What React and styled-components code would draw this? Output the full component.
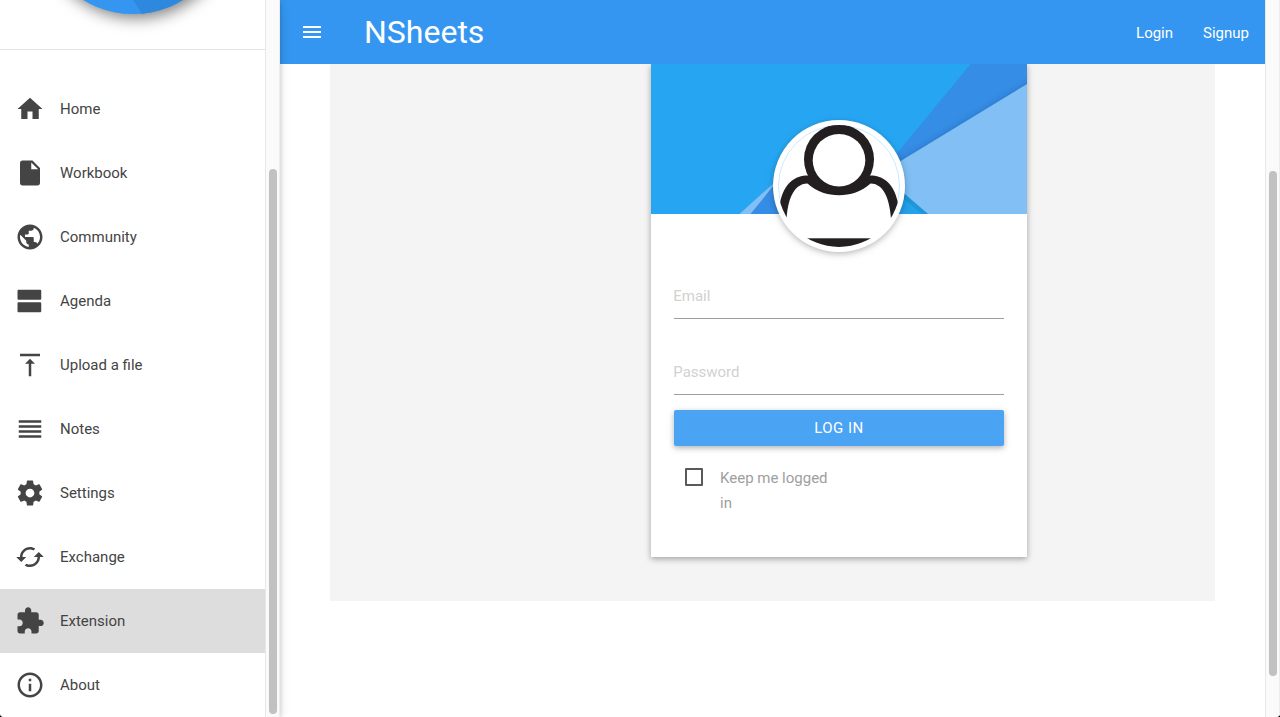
import React from "react";
import styled, { createGlobalStyle } from "styled-components";

const GlobalStyle = createGlobalStyle`
  * { box-sizing: border-box; }
  body {
    margin: 0;
    background: #000;
    color: #444;
    font: 15px/22px Roboto, "Liberation Sans", sans-serif;
  }
`;

const Shell = styled.div`
  display: flex;
  width: 1280px;
  height: 717px;
  overflow: hidden;
  border-radius: 0 0 4px 4px;
  background: #fff;
`;

const Sidebar = styled.aside`
  display: flex;
  flex: none;
  width: 280px;
  height: 100%;
  background: #fff;
  position: relative;
  z-index: 2;
  box-shadow: 0 2px 5px 0 rgba(0, 0, 0, 0.16), 0 2px 10px 0 rgba(0, 0, 0, 0.12);
`;

const SidebarContent = styled.div`
  width: 265px;
  flex: none;
`;

const Brand = styled.div`
  display: flex;
  justify-content: center;
  align-items: flex-end;
  height: 50px;
  padding-bottom: 35px;
  overflow: hidden;
  border-bottom: 1px solid #e4e4e4;
`;

const Logo = styled.div`
  flex: none;
  width: 192px;
  height: 192px;
  border-radius: 50%;
  overflow: hidden;
  background: #3496f0;
  box-shadow: 3px 4px 15px rgba(0, 0, 0, 0.5);

  svg { display: block; }
`;

const Menu = styled.nav`
  display: flex;
  flex-direction: column;
  padding-top: 27px;
`;

const MenuItem = styled.a`
  display: flex;
  align-items: center;
  gap: 15px;
  height: 64px;
  padding: 0 15px;
  color: #444;
  background: ${(p) => (p.$active ? "#ddd" : "transparent")};
`;

const Glyph = styled.svg`
  flex: none;
  display: block;
  width: ${(p) => p.$size}px;
  height: ${(p) => p.$size}px;
  fill: currentColor;
`;

const ScrollTrack = styled.div`
  flex: none;
  width: 15px;
  height: 100%;
  padding: ${(p) => p.$top}px 2px 0 3px;
  background: #fafafa;
  border-left: 1px solid #e8e8e8;
  border-right: 1px solid #ededed;
`;

const ScrollThumb = styled.div`
  width: 8px;
  height: ${(p) => p.$length}px;
  border-radius: 4px;
  background: #c1c1c1;
`;

const Main = styled.main`
  flex: none;
  width: 985px;
  background: #fff;
`;

const TopBar = styled.header`
  display: flex;
  align-items: center;
  height: 64px;
  padding: 0 16px 0 20px;
  background: #3496f0;
  color: #fff;
`;

const Title = styled.h1`
  margin: 0 auto 0 40px;
  font-size: 32px;
  font-weight: 400;
  line-height: 64px;
`;

const TopLinks = styled.div`
  display: flex;
  gap: 30px;
  padding-top: 2px;
`;

const Panel = styled.section`
  display: flex;
  justify-content: flex-start;
  width: 885px;
  height: 537px;
  margin: 0 50px;
  padding-left: 321px;
  background: #f4f4f4;
  overflow: hidden;
`;

const Card = styled.div`
  width: 376px;
  height: 493px;
  background: #fff;
  box-shadow: 0 2px 5px 0 rgba(0, 0, 0, 0.2), 0 2px 8px 0 rgba(0, 0, 0, 0.16);
`;

const Cover = styled.div`
  height: 150px;
  position: relative;

  > svg { display: block; }
`;

const Avatar = styled.div`
  position: absolute;
  left: 122px;
  top: 56px;
  width: 132px;
  height: 132px;
  border-radius: 50%;
  background: #fff;
  box-shadow: 0 2px 5px 0 rgba(0, 0, 0, 0.16), 0 2px 10px 0 rgba(0, 0, 0, 0.12);

  svg { display: block; }
`;

const Form = styled.form`
  display: flex;
  flex-direction: column;
  padding: 59px 23px 0;
`;

const Field = styled.label`
  display: block;
  height: 46px;
  margin-bottom: ${(p) => p.$gap}px;
  padding-top: 12px;
  border-bottom: 1px solid #9e9e9e;
  color: #d1d1d1;
  text-indent: -0.75px;
`;

const SubmitButton = styled.button`
  height: 36px;
  padding: 0;
  border: 0;
  border-radius: 2px;
  background: #4aa3f3;
  color: #fff;
  font: inherit;
  line-height: 36px;
  letter-spacing: 0.5px;
  box-shadow: 0 2px 5px 0 rgba(0, 0, 0, 0.2), 0 2px 8px 0 rgba(0, 0, 0, 0.12);
`;

const Remember = styled.label`
  display: flex;
  align-items: flex-start;
  gap: 17px;
  width: 165px;
  margin-top: 20px;
  padding-left: 11px;
  color: #9e9e9e;
  line-height: 25px;
`;

const CheckBox = styled.span`
  flex: none;
  width: 18px;
  height: 18px;
  margin-top: 2px;
  border: 2px solid #5a5a5a;
  border-radius: 1px;
`;

const icons = {
  home: "M10 20v-6h4v6h5v-8h3L12 3 2 12h3v8z",
  file: "M6 2c-1.1 0-1.99.9-1.99 2L4 20c0 1.1.89 2 1.99 2H18c1.1 0 2-.9 2-2V8l-6-6H6zm7 7V3.5L18.5 9H13z",
  globe:
    "M12 2C6.48 2 2 6.48 2 12s4.48 10 10 10 10-4.48 10-10S17.52 2 12 2zm-1 17.93c-3.95-.49-7-3.85-7-7.93 0-.62.08-1.21.21-1.79L9 15v1c0 1.1.9 2 2 2v1.93zm6.9-2.54c-.26-.81-1-1.39-1.9-1.39h-1v-3c0-.55-.45-1-1-1H8v-2h2c.55 0 1-.45 1-1V7h2c1.1 0 2-.9 2-2v-.41c2.93 1.19 5 4.06 5 7.41 0 2.08-.8 3.97-2.1 5.39z",
  agenda:
    "M20 13H3c-.55 0-1 .45-1 1v6c0 .55.45 1 1 1h17c.55 0 1-.45 1-1v-6c0-.55-.45-1-1-1zm0-10H3c-.55 0-1 .45-1 1v6c0 .55.45 1 1 1h17c.55 0 1-.45 1-1V4c0-.55-.45-1-1-1z",
  upload: "M8 11h3v10h2V11h3l-4-4-4 4zM4 3v2h16V3H4z",
  notes: "M3 15h18v-2H3v2zm0 4h18v-2H3v2zm0-8h18V9H3v2zm0-6v2h18V5H3z",
  gear:
    "M19.43 12.98c.04-.32.07-.64.07-.98s-.03-.66-.07-.98l2.11-1.65c.19-.15.24-.42.12-.64l-2-3.46c-.12-.22-.39-.3-.61-.22l-2.49 1c-.52-.4-1.08-.73-1.69-.98l-.38-2.65C14.46 2.18 14.25 2 14 2h-4c-.25 0-.46.18-.49.42l-.38 2.65c-.61.25-1.17.59-1.69.98l-2.49-1c-.23-.09-.49 0-.61.22l-2 3.46c-.13.22-.07.49.12.64l2.11 1.65c-.04.32-.07.65-.07.98s.03.66.07.98l-2.11 1.65c-.19.15-.24.42-.12.64l2 3.46c.12.22.39.3.61.22l2.49-1c.52.4 1.08.73 1.69.98l.38 2.65c.03.24.24.42.49.42h4c.25 0 .46-.18.49-.42l.38-2.65c.61-.25 1.17-.59 1.69-.98l2.49 1c.23.09.49 0 .61-.22l2-3.46c.12-.22.07-.49-.12-.64l-2.11-1.65zM12 15.5c-1.93 0-3.5-1.57-3.5-3.5s1.57-3.5 3.5-3.5 3.5 1.57 3.5 3.5-1.57 3.5-3.5 3.5z",
  exchange:
    "M19 8l-4 4h3c0 3.31-2.69 6-6 6-1.01 0-1.97-.25-2.8-.7l-1.46 1.46C8.97 19.54 10.43 20 12 20c4.42 0 8-3.58 8-8h3l-4-4zM6 12c0-3.31 2.69-6 6-6 1.01 0 1.97.25 2.8.7l1.46-1.46C15.03 4.46 13.57 4 12 4c-4.42 0-8 3.58-8 8H1l4 4 4-4H6z",
  puzzle:
    "M20.5 11H19V7c0-1.1-.9-2-2-2h-4V3.5C13 2.12 11.88 1 10.5 1S8 2.12 8 3.5V5H4c-1.1 0-1.99.9-1.99 2v3.8H3.5c1.49 0 2.7 1.21 2.7 2.7s-1.21 2.7-2.7 2.7H2V20c0 1.1.9 2 2 2h3.8v-1.5c0-1.49 1.21-2.7 2.7-2.7 1.49 0 2.7 1.21 2.7 2.7V22H17c1.1 0 2-.9 2-2v-4h1.5c1.38 0 2.5-1.12 2.5-2.5S21.88 11 20.5 11z",
  info: "M11 17h2v-6h-2v6zm1-15C6.48 2 2 6.48 2 12s4.48 10 10 10 10-4.48 10-10S17.52 2 12 2zm0 18c-4.41 0-8-3.59-8-8s3.59-8 8-8 8 3.59 8 8-3.59 8-8 8zM11 9h2V7h-2v2z",
  menu: "M3 18h18v-2H3v2zm0-5h18v-2H3v2zm0-7v2h18V6H3z",
};

function Icon({ name, size = 30 }) {
  return (
    <Glyph viewBox="0 0 24 24" $size={size} aria-hidden="true">
      <path d={icons[name]} />
    </Glyph>
  );
}

const entries = [
  ["home", "Home"],
  ["file", "Workbook"],
  ["globe", "Community"],
  ["agenda", "Agenda"],
  ["upload", "Upload a file"],
  ["notes", "Notes"],
  ["gear", "Settings"],
  ["exchange", "Exchange"],
  ["puzzle", "Extension"],
  ["info", "About"],
];

function CoverArt() {
  return (
    <svg width="376" height="150" viewBox="0 0 376 150">
      <defs>
        <filter id="edge" x="-20%" y="-20%" width="140%" height="140%">
          <feDropShadow dx="0" dy="0" stdDeviation="3" floodColor="#003a70" floodOpacity="0.35" />
        </filter>
      </defs>
      <rect width="376" height="150" fill="#26a6f2" />
      <path d="M319.500 0H376V60L249 137L200 145Z" fill="#358de5" />
      <path d="M200 150V110L252 110L277 150Z" fill="#26a6f2" />
      <path d="M390 11.500L230 109L277 150L300 168H390Z" fill="#82bff5" filter="url(#edge)" />
      <path d="M240 120L277 150H240Z" fill="#1c97da" />
      <path d="M240 124L271 150H240Z" fill="#24a1ea" />
      <path d="M99 150L130 110V150Z" fill="#358de5" />
      <path d="M88.500 150L130 112.500L99.500 150Z" fill="#82bff5" />
    </svg>
  );
}

function AvatarArt() {
  return (
    <svg width="132" height="132" viewBox="0 0 132 132">
      <defs>
        <clipPath id="face">
          <circle cx="66" cy="66" r="61" />
        </clipPath>
        <linearGradient id="rim" x1="0" y1="0.600" x2="0" y2="0.750">
          <stop offset="0" stopColor="#a9d9fa" />
          <stop offset="1" stopColor="#a9d9fa" stopOpacity="0" />
        </linearGradient>
      </defs>
      <circle cx="66" cy="66" r="60.500" fill="none" stroke="url(#rim)" strokeWidth="0.600" />
      <g clipPath="url(#face)">
        <path
          d="M35 55.500C22 55.500 11 63 7 83L5 108H13.500C13 82 20 63.500 34.500 63.500C43 71.500 55 75.300 66 75.300S89 71.500 97.500 63.500C112 63.500 118 82 118.500 108H127L125 83C121 63 110 55.500 97 55.500Z"
          fill="#231f20"
        />
        <ellipse cx="66" cy="39.500" rx="35" ry="35" fill="#231f20" />
        <circle cx="66" cy="40.200" r="26.300" fill="#fff" />
        <rect x="20" y="118.300" width="92" height="14" fill="#231f20" />
      </g>
    </svg>
  );
}

export default function App() {
  return (
    <>
      <GlobalStyle />
      <Shell>
        <Sidebar>
          <SidebarContent>
            <Brand>
              <Logo>
                <svg width="192" height="192" viewBox="0 0 192 192">
                  <path d="M46 92L96 178L105 192H192V92Z" fill="#2e88de" />
                </svg>
              </Logo>
            </Brand>
            <Menu>
              {entries.map(([icon, label]) => (
                <MenuItem key={label} $active={label === "Extension"}>
                  <Icon name={icon} />
                  {label}
                </MenuItem>
              ))}
            </Menu>
          </SidebarContent>
          <ScrollTrack $top={169}>
            <ScrollThumb $length={545} />
          </ScrollTrack>
        </Sidebar>
        <Main>
          <TopBar>
            <Icon name="menu" size={24} />
            <Title>NSheets</Title>
            <TopLinks>
              <span>Login</span>
              <span>Signup</span>
            </TopLinks>
          </TopBar>
          <Panel>
            <Card>
              <Cover>
                <CoverArt />
                <Avatar>
                  <AvatarArt />
                </Avatar>
              </Cover>
              <Form>
                <Field $gap={30}>Email</Field>
                <Field $gap={15}>Password</Field>
                <SubmitButton type="button">LOG IN</SubmitButton>
                <Remember>
                  <CheckBox />
                  <span>Keep me logged in</span>
                </Remember>
              </Form>
            </Card>
          </Panel>
        </Main>
        <ScrollTrack $top={171}>
          <ScrollThumb $length={505} />
        </ScrollTrack>
      </Shell>
    </>
  );
}
